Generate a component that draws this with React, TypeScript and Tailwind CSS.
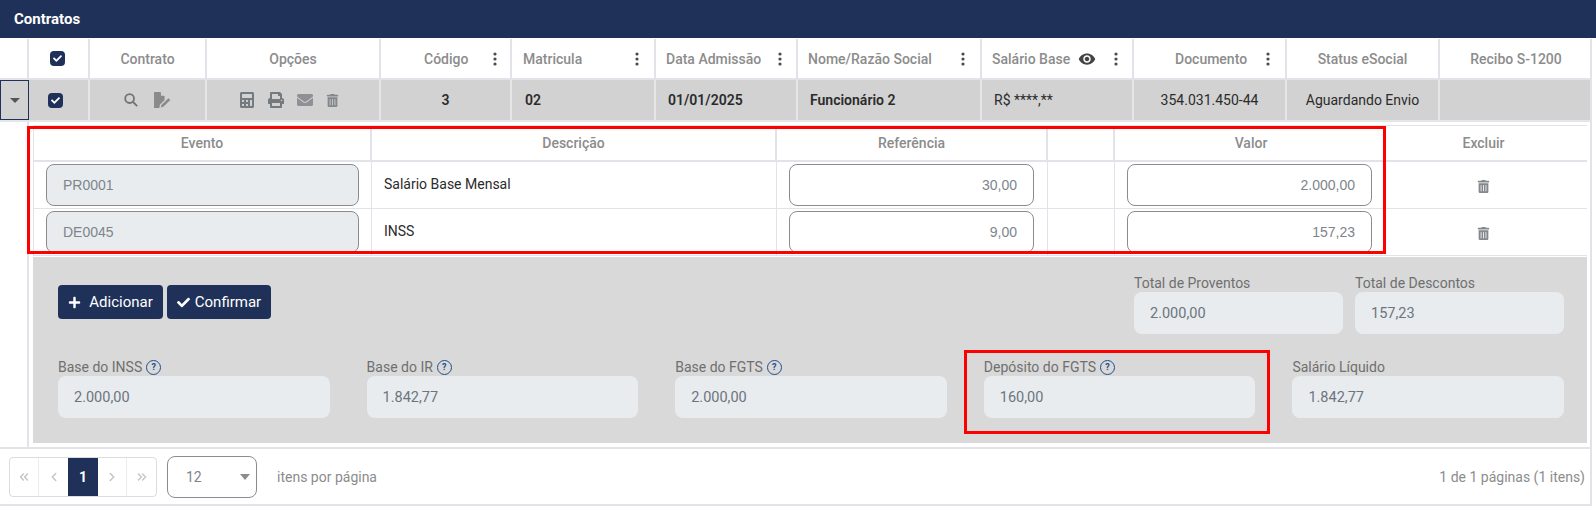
import { FC, ReactNode } from "react";
import { FaCalculator, FaCheck, FaEnvelope, FaPlus, FaPrint, FaTrashAlt } from "react-icons/fa";
import { MdRemoveRedEye } from "react-icons/md";
import { ChevronLeft, ChevronRight, ChevronsLeft, ChevronsRight } from "lucide-react";

const Kebab: FC<{ className?: string }> = ({ className }) => (
  <svg width="4" height="14" viewBox="0 0 4 14" className={className}>
    <circle cx="2" cy="2" r="1.6" fill="#4b4b4b" />
    <circle cx="2" cy="7" r="1.6" fill="#4b4b4b" />
    <circle cx="2" cy="12" r="1.6" fill="#4b4b4b" />
  </svg>
);

const Check: FC<{ className?: string }> = ({ className }) => (
  <span className={`flex h-[15px] w-[15px] items-center justify-center rounded-[4px] bg-[#1f3159] ${className ?? ""}`}>
    <FaCheck className="text-[9px] text-white" />
  </span>
);

const Help = () => (
  <span className="ml-[4px] inline-flex h-[15px] w-[15px] items-center justify-center rounded-full border border-[#1f4e8c] text-[9px] leading-none font-bold text-[#1f4e8c]">
    ?
  </span>
);

const FileEdit = () => (
  <svg width="19" height="16" viewBox="0 0 18 15">
    <path d="M1 0h6l4 4v3.5L6.5 12 6 15H1z" fill="#8a8a8a" />
    <path d="M7.5 0v3.5H11z" fill="#d2d2d2" />
    <path d="M8 12.2l6.6-6.4 1.8 1.8-6.6 6.4-2.4.6z" fill="#8a8a8a" />
  </svg>
);

const SearchIcon = () => (
  <svg width="14" height="14" viewBox="0 0 14 14" fill="none" stroke="#6f7478" strokeWidth="1.8">
    <circle cx="5.6" cy="5.6" r="4.4" />
    <path d="M9 9l4.2 4.2" />
  </svg>
);

const HeadCell: FC<{ w: string; children: ReactNode; className?: string }> = ({ w, children, className }) => (
  <div className={`flex h-full items-center border-r-2 border-[#e1e3e8] text-sm font-medium text-[#8c8c8c] ${w} ${className ?? ""}`}>
    {children}
  </div>
);

const RowCell: FC<{ w: string; children?: ReactNode; className?: string }> = ({ w, children, className }) => (
  <div className={`flex h-full items-center border-r-2 border-[#e4e6ea] text-sm text-[#2b2b2b] ${w} ${className ?? ""}`}>
    {children}
  </div>
);

const EventRow: FC<{ code: string; desc: string; ref1: string; value: string }> = ({ code, desc, ref1, value }) => (
  <div className="flex h-[47px] border-b border-[#e1e3e8] text-sm">
    <div className="w-[338px] border-r border-[#e1e3e8] pt-[2px] pl-[12px]">
      <div className="flex h-[42px] w-[313px] items-center rounded-[8px] border border-[#8c8c8c] bg-[#e9ecef] pl-[16px] font-['Liberation_Sans',sans-serif] text-[#7d858c]">
        {code}
      </div>
    </div>
    <div className="flex w-[405px] items-center border-r border-[#e1e3e8] pb-[3px] pl-[12px] text-[#2b2b2b]">{desc}</div>
    <div className="w-[271px] border-r border-[#e1e3e8] pt-[2px] pl-[12px]">
      <div className="flex h-[42px] w-[245px] items-center justify-end rounded-[8px] border border-[#8c8c8c] pr-[16px] font-['Liberation_Sans',sans-serif] text-[#7d858c]">
        {ref1}
      </div>
    </div>
    <div className="w-[67px] border-r border-[#e1e3e8]" />
    <div className="w-[272px] pt-[2px] pl-[12px]">
      <div className="flex h-[42px] w-[245px] items-center justify-end rounded-[8px] border border-[#8c8c8c] pr-[16px] font-['Liberation_Sans',sans-serif] text-[#7d858c]">
        {value}
      </div>
    </div>
    <div className="flex flex-1 items-center justify-center pt-[3px] pr-[7px]">
      <FaTrashAlt className="text-[13px] text-[#84888c]" />
    </div>
  </div>
);

const Total: FC<{ label: string; value: string; help?: boolean; w: string }> = ({ label, value, help, w }) => (
  <div className={w}>
    <div className="flex h-[16px] items-center text-sm text-[#6f6f6f]">
      {label}
      {help && <Help />}
    </div>
    <div className="mt-[1px] flex h-[42px] items-center rounded-[8px] bg-[#e9ecef] pt-[2px] pl-[16px] text-[14.5px] text-[#6c757d]">{value}</div>
  </div>
);

export default function App() {
  return (
    <div className="relative h-[511px] w-[1596px] overflow-hidden bg-white font-['Roboto',sans-serif]">
      <div className="flex h-[38px] items-center bg-[#1f3159] pl-[14px] text-[15px] font-bold text-white">Contratos</div>

      <div className="w-[1592px] border-r-2 border-[#e1e3e8]">
        <div className="mt-[1px] flex h-[41px] border-b-2 border-[#e1e3e8]">
          <HeadCell w="w-[29px]">{""}</HeadCell>
          <HeadCell w="w-[61px]" className="justify-center">
            <Check className="mr-[3px]" />
          </HeadCell>
          <HeadCell w="w-[117px]" className="justify-center">Contrato</HeadCell>
          <HeadCell w="w-[174px]" className="justify-center">Opções</HeadCell>
          <HeadCell w="w-[131px]" className="pl-[43px]">
            Código
            <Kebab className="ml-[25px]" />
          </HeadCell>
          <HeadCell w="w-[144px]" className="pl-[11px]">
            Matricula
            <Kebab className="ml-auto mr-[15px]" />
          </HeadCell>
          <HeadCell w="w-[142px]" className="pl-[10px]">
            Data Admissão
            <Kebab className="ml-auto mr-[14px]" />
          </HeadCell>
          <HeadCell w="w-[184px]" className="pl-[10px]">
            Nome/Razão Social
            <Kebab className="ml-auto mr-[15px]" />
          </HeadCell>
          <HeadCell w="w-[152px]" className="pl-[10px]">
            Salário Base
            <MdRemoveRedEye className="ml-[8px] text-[18px] text-[#444]" />
            <Kebab className="ml-auto mr-[14px]" />
          </HeadCell>
          <HeadCell w="w-[153px]" className="pl-[41px]">
            Documento
            <Kebab className="ml-auto mr-[15px]" />
          </HeadCell>
          <HeadCell w="w-[153px]" className="justify-center">Status eSocial</HeadCell>
          <div className="flex flex-1 items-center justify-center pl-[2px] text-sm font-medium text-[#8c8c8c]">Recibo S-1200</div>
        </div>

        <div className="flex h-[42px] border-b-2 border-[#e4e6ea] bg-[#d2d2d2]">
          <div className="flex h-full w-[29px] items-center justify-center border border-[#1f3159]">
            <span className="h-0 w-0 border-x-[5px] border-t-[5px] border-x-transparent border-t-[#555]" />
          </div>
          <RowCell w="w-[61px]" className="justify-center">
            <Check className="mr-[7px]" />
          </RowCell>
          <RowCell w="w-[117px]" className="justify-center gap-[15px]">
            <SearchIcon />
            <FileEdit />
          </RowCell>
          <RowCell w="w-[174px]" className="justify-center gap-[13px] pr-[8px]">
            <FaCalculator className="text-[16px] text-[#757a7e]" />
            <FaPrint className="text-[16px] text-[#757a7e]" />
            <FaEnvelope className="text-[16px] text-[#8f9093]" />
            <FaTrashAlt className="text-[13px] text-[#84888c]" />
          </RowCell>
          <RowCell w="w-[131px]" className="justify-center font-semibold">3</RowCell>
          <RowCell w="w-[144px]" className="pl-[13px] font-semibold">02</RowCell>
          <RowCell w="w-[142px]" className="pl-[12px] font-semibold">01/01/2025</RowCell>
          <RowCell w="w-[184px]" className="pl-[12px] font-semibold">Funcionário 2</RowCell>
          <RowCell w="w-[152px]" className="pl-[12px]">R$ ****,**</RowCell>
          <RowCell w="w-[153px]" className="justify-center">354.031.450-44</RowCell>
          <RowCell w="w-[153px]" className="justify-center">Aguardando Envio</RowCell>
          <div className="flex-1" />
        </div>

        <div className="flex h-[325px]">
          <div className="w-[29px] border-r-2 border-[#e1e3e8]" />
          <div className="w-[1559px] pt-[3px] pl-[4px]">
            <div className="w-[1554px] border-t border-l border-[#e1e3e8]">
              <div className="flex h-[36px] border-b-2 border-[#e1e3e8] text-sm font-medium text-[#8c8c8c]">
                <div className="flex w-[338px] items-center justify-center border-r-2 border-[#e1e3e8]">Evento</div>
                <div className="flex w-[405px] items-center justify-center border-r-2 border-[#e1e3e8]">Descrição</div>
                <div className="flex w-[271px] items-center justify-center border-r-2 border-[#e1e3e8]">Referência</div>
                <div className="w-[67px] border-r-2 border-[#e1e3e8]" />
                <div className="flex w-[272px] items-center justify-center">Valor</div>
                <div className="flex flex-1 items-center justify-center pr-[7px]">Excluir</div>
              </div>
              <EventRow code="PR0001" desc="Salário Base Mensal" ref1="30,00" value="2.000,00" />
              <EventRow code="DE0045" desc="INSS" ref1="9,00" value="157,23" />
            </div>

            <div className="mt-[1px] h-[186px] w-[1554px] bg-[#d9d9d9] pt-[28px] pr-[23px] pl-[25px]">
              <div className="flex h-[76px] items-start">
                <button className="flex h-[34px] w-[105px] items-center justify-center gap-[8px] rounded-[4px] bg-[#1f3159] text-[15px] text-white">
                  <FaPlus className="text-[13px]" />
                  Adicionar
                </button>
                <button className="ml-[4px] flex h-[34px] w-[104px] items-center justify-center gap-[5px] rounded-[4px] bg-[#1f3159] text-[15px] text-white">
                  <FaCheck className="text-[13px]" />
                  Confirmar
                </button>
                <div className="mt-[-10px] ml-auto flex gap-[12px]">
                  <Total w="w-[209px]" label="Total de Proventos" value="2.000,00" />
                  <Total w="w-[209px]" label="Total de Descontos" value="157,23" />
                </div>
              </div>
              <div className="mt-[-2px] grid grid-cols-5 gap-x-[37px]">
                <Total w="w-full" label="Base do INSS" value="2.000,00" help />
                <Total w="w-full" label="Base do IR" value="1.842,77" help />
                <Total w="w-full" label="Base do FGTS" value="2.000,00" help />
                <Total w="w-full" label="Depósito do FGTS" value="160,00" help />
                <Total w="w-full" label="Salário Líquido" value="1.842,77" />
              </div>
            </div>
          </div>
        </div>

        <div className="flex h-[59px] items-center border-y-2 border-[#e1e3e8] pr-[5px] pl-[9px] text-sm text-[#8c8c8c]">
          <div className="flex h-[40px] w-[148px] items-center rounded-[4px] border border-[#dcdcdc] text-[#c4c4c4]">
            <span className="flex h-full w-[29px] items-center justify-center border-r border-[#ececec]">
              <ChevronsLeft size={14} strokeWidth={2.5} />
            </span>
            <span className="flex h-full w-[29px] items-center justify-center">
              <ChevronLeft size={14} strokeWidth={2.5} />
            </span>
            <span className="flex h-[38px] w-[30px] items-center justify-center bg-[#1f3159] font-bold text-white">1</span>
            <span className="flex h-full w-[29px] items-center justify-center border-r border-[#ececec]">
              <ChevronRight size={14} strokeWidth={2.5} />
            </span>
            <span className="flex h-full flex-1 items-center justify-center">
              <ChevronsRight size={14} strokeWidth={2.5} />
            </span>
          </div>
          <div className="ml-[10px] flex h-[42px] w-[90px] items-center rounded-[8px] border border-[#8c8c8c] pr-[6px] pl-[18px] text-[#7d858c]">
            12
            <span className="ml-auto h-0 w-0 border-x-[5px] border-t-[6px] border-x-transparent border-t-[#8c8c8c]" />
          </div>
          <span className="ml-[20px]">itens por página</span>
          <span className="ml-auto">1 de 1 páginas (1 itens)</span>
        </div>
      </div>

      <div className="absolute top-[126px] left-[27px] h-[128px] w-[1359px] border-[3px] border-[#ff0000]" />
      <div className="absolute top-[350px] left-[964px] h-[84px] w-[306px] border-[3px] border-[#ff0000]" />
    </div>
  );
}
